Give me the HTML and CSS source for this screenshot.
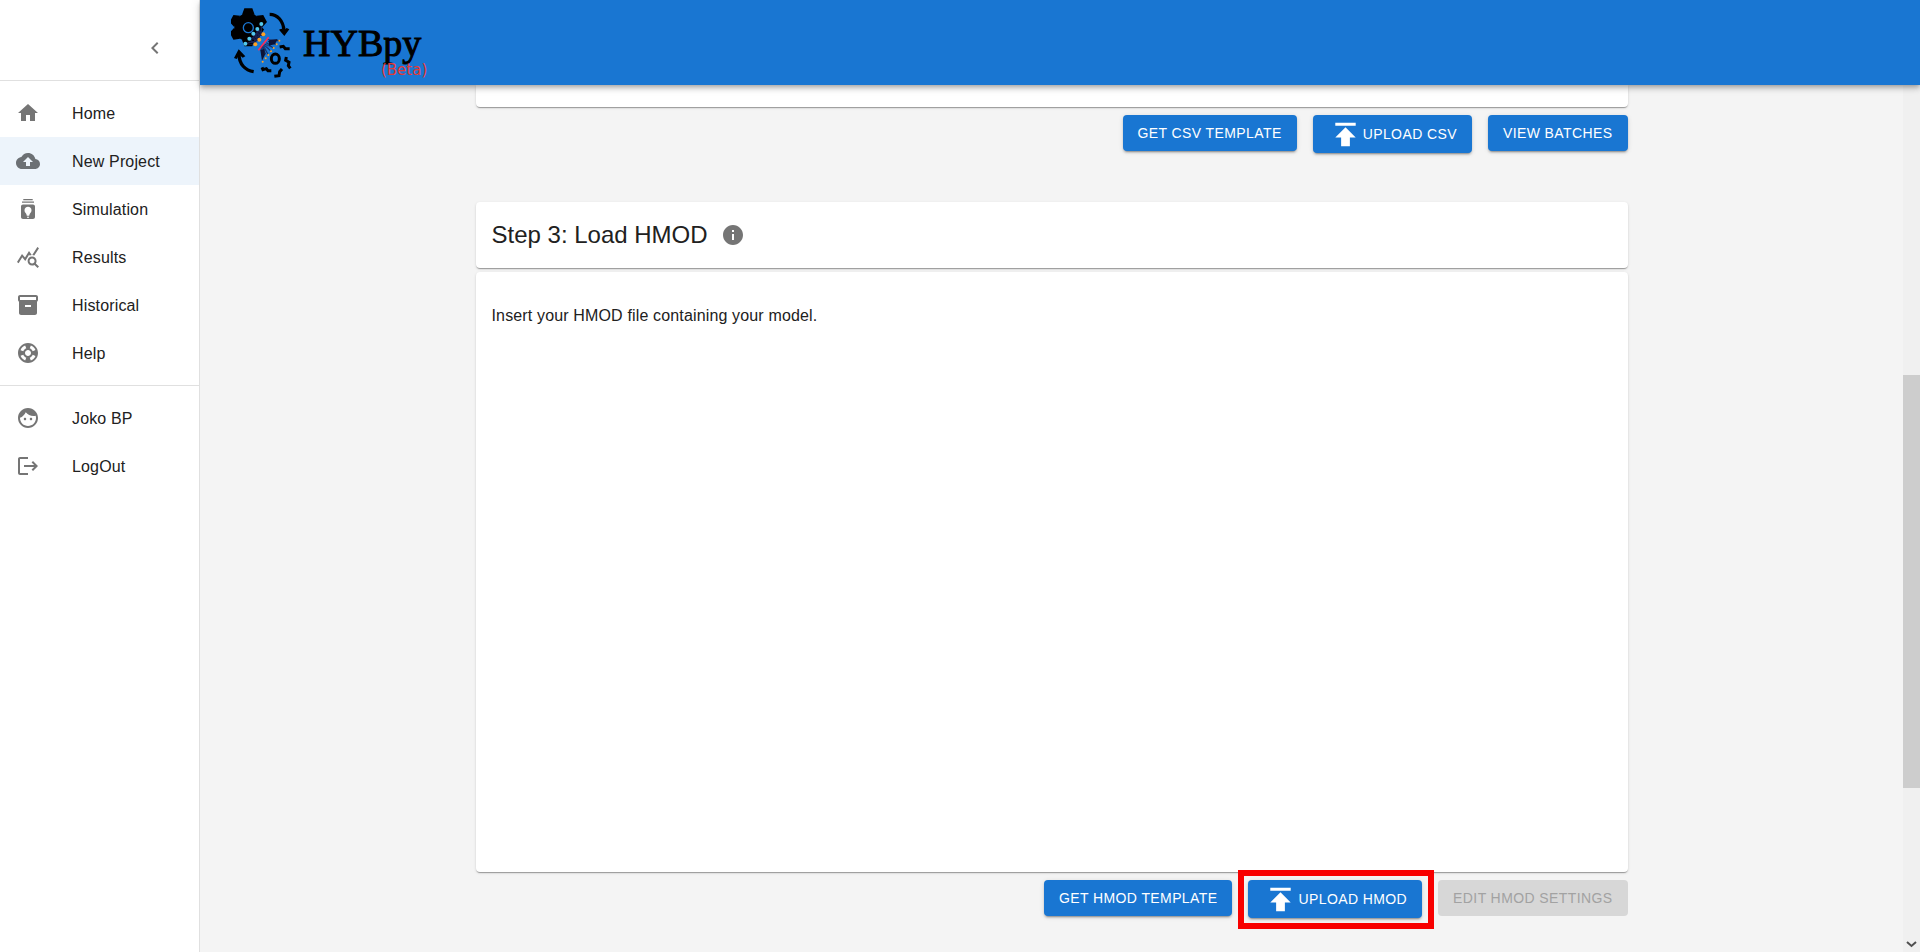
FILE: index.html
```html
<!DOCTYPE html>
<html lang="en">
<head>
<meta charset="utf-8">
<meta name="viewport" content="width=device-width, initial-scale=1">
<title>HYBpy - New Project</title>
<link rel="stylesheet" href="styles.css">
</head>
<body>
<div class="app">
  <aside class="sidebar">
    <div class="sidebar-top">
      <button class="icon-button" type="button" aria-label="Collapse menu">
        <svg class="icon" viewBox="0 0 24 24"><path d="M15.41 7.41 14 6l-6 6 6 6 1.41-1.41L10.83 12z"/></svg>
      </button>
    </div>
    <nav class="nav">
      <a class="nav-item" href="#home">
        <svg class="icon" viewBox="0 0 24 24"><path d="M10 20v-6h4v6h5v-8h3L12 3 2 12h3v8z"/></svg>
        <span>Home</span>
      </a>
      <a class="nav-item nav-item-active" href="#new">
        <svg class="icon" viewBox="0 0 24 24"><path d="M19.35 10.04C18.67 6.59 15.64 4 12 4 9.11 4 6.6 5.64 5.35 8.04 2.34 8.36 0 10.91 0 14c0 3.31 2.69 6 6 6h13c2.76 0 5-2.24 5-5 0-2.64-2.05-4.78-4.65-4.96zM14 13v4h-4v-4H7l5-5 5 5h-3z"/></svg>
        <span>New Project</span>
      </a>
      <a class="nav-item" href="#simulation">
        <svg class="icon" viewBox="0 0 24 24"><path d="M7.300 2h9.400v1.200H7.300zM6 4.600h12v1.200H6z"/><path fill-rule="evenodd" d="M17 7.500H7c-1.100 0-2 .9-2 2V20c0 1.100.9 2 2 2h10c1.100 0 2-.9 2-2V9.500c0-1.100-.9-2-2-2zM12 9.700c2 0 3.500 1.500 3.500 3.500 0 1.500-.8 2.500-1.500 3.200-.4.5-.7 1.300-.8 2.400h-2.400c-.1-1.100-.4-1.900-.8-2.400-.7-.7-1.500-1.700-1.500-3.200 0-2 1.500-3.500 3.500-3.500zM11 19.800h2v1h-2z"/></svg>
        <span>Simulation</span>
      </a>
      <a class="nav-item" href="#results">
        <svg class="icon" viewBox="0 0 24 24"><path d="M19.88 18.47c.44-.7.7-1.51.7-2.39 0-2.49-2.01-4.5-4.5-4.5s-4.5 2.010-4.5 4.500 2.010 4.500 4.490 4.500c.88 0 1.700-.26 2.390-.7L21.580 23 23 21.580l-3.120-3.110zm-3.800.11c-1.380 0-2.500-1.120-2.500-2.500s1.120-2.500 2.500-2.500 2.500 1.120 2.500 2.500-1.120 2.500-2.500 2.500zm-.36-8.500c-.74.02-1.450.18-2.100.45l-.55-.83-3.800 6.180-3.010-3.520-3.630 5.810L1 17l5-8 3 3.500L13 6l2.720 4.080zm2.590.5c-.64-.28-1.330-.45-2.050-.49L21.380 2 23 3.180l-4.690 7.400z"/></svg>
        <span>Results</span>
      </a>
      <a class="nav-item" href="#historical">
        <svg class="icon" viewBox="0 0 24 24"><path d="M20 2H4c-1 0-2 .9-2 2v3.010c0 .72.43 1.340 1 1.690V20c0 1.100 1.100 2 2 2h14c.9 0 2-.9 2-2V8.700c.57-.35 1-.97 1-1.690V4c0-1.100-1-2-2-2zm-5 12H9v-2h6v2zm5-7H4V4h16v3z"/></svg>
        <span>Historical</span>
      </a>
      <a class="nav-item" href="#help">
        <svg class="icon" viewBox="0 0 24 24"><path d="M12 2C6.480 2 2 6.480 2 12s4.480 10 10 10 10-4.480 10-10S17.520 2 12 2zm7.460 7.120-2.780 1.150c-.51-1.360-1.580-2.440-2.950-2.940l1.150-2.780c2.100.8 3.770 2.470 4.580 4.570zM12 15c-1.660 0-3-1.340-3-3s1.340-3 3-3 3 1.340 3 3-1.340 3-3 3zM9.130 4.540l1.170 2.780c-1.380.5-2.470 1.590-2.980 2.970L4.540 9.130c.81-2.110 2.480-3.780 4.590-4.590zM4.540 14.870l2.780-1.150c.51 1.380 1.590 2.460 2.970 2.960l-1.170 2.780c-2.100-.81-3.770-2.480-4.580-4.590zm10.340 4.590-1.150-2.780c1.370-.51 2.450-1.590 2.950-2.970l2.780 1.170c-.81 2.100-2.480 3.770-4.580 4.580z"/></svg>
        <span>Help</span>
      </a>
    </nav>
    <nav class="nav nav-account">
      <a class="nav-item" href="#profile">
        <svg class="icon" viewBox="0 0 24 24"><path d="M10.250 13c0 .69-.56 1.250-1.250 1.250S7.750 13.690 7.750 13s.56-1.250 1.250-1.250 1.250.56 1.250 1.250zM15 11.750c-.69 0-1.250.56-1.250 1.250s.56 1.250 1.250 1.250 1.250-.56 1.250-1.250-.56-1.250-1.250-1.250zm7 .25c0 5.520-4.480 10-10 10S2 17.520 2 12 6.480 2 12 2s10 4.480 10 10zm-2 0c0-.78-.12-1.530-.33-2.240-.7.150-1.420.24-2.170.24-3.130 0-5.920-1.440-7.760-3.690C8.690 8.870 6.600 10.880 4 11.860c.01.04 0 .09 0 .14 0 4.410 3.590 8 8 8s8-3.590 8-8z"/></svg>
        <span>Joko BP</span>
      </a>
      <a class="nav-item" href="#logout">
        <svg class="icon" viewBox="0 0 24 24"><path d="M4 5h8V3H4c-1.100 0-2 .9-2 2v14c0 1.100.9 2 2 2h8v-2H4zM17 7l-1.410 1.410L18.170 11H8v2h10.170l-2.580 2.580L17 17l5-5z"/></svg>
        <span>LogOut</span>
      </a>
    </nav>
  </aside>

  <div class="main">
    <header class="app-bar">
      <svg class="logo" viewBox="18 18 186 219" role="img" aria-label="HYBpy logo">
        <g transform="translate(70 82)">
          <circle r="42"/>
          <g id="teeth"><path d="M-19-38-12-57h24l7 19zM-19 38-12 57h24l7-19z"/></g>
          <use href="#teeth" transform="rotate(62)"/>
          <use href="#teeth" transform="rotate(118)"/>
        </g>
        <circle cx="70" cy="83" r="15" fill="none" stroke="#1976d2" stroke-width="4"/>
        <path d="M84 142 122 80l15 24-34 44z" fill="#1976d2"/>
        <g fill="none" stroke="#17204f" stroke-width="4">
          <path d="M109 72v31L97 87l6 32-18-18 6 32-18-17 18 17-30-2 42-12-30-3 42-13-18-16M91 133 85 101l30 2M97 87l-6 46"/>
          <path d="M125 118l38 4-34 2 25 9-30-4 22 15-27-12 19 22-23-20 15 31-18-29 10 27-12-24 3 32-7-33" stroke-width="2"/>
        </g>
        <path d="M132 121l26-4-8 15-18 5zM106 150l12-3 2 17-9 18z" fill="#0d1235"/>
        <path d="M131 112 100 151" fill="none" stroke="#ff2d55" stroke-width="5"/>
        <g fill="#53c8ec"><circle cx="109" cy="72" r="6"/><circle cx="97" cy="87" r="6"/><circle cx="85" cy="101" r="6"/><circle cx="73" cy="116" r="6"/><circle cx="61" cy="131" r="6"/></g>
        <g fill="#ffa226"><circle cx="115" cy="103" r="6"/><circle cx="103" cy="119" r="6"/><circle cx="91" cy="133" r="6"/><circle cx="163" cy="122" r="3"/><circle cx="155" cy="133" r="3"/><circle cx="146" cy="144" r="3"/><circle cx="138" cy="154" r="3"/><circle cx="130" cy="165" r="3"/><circle cx="122" cy="175" r="3"/><circle cx="113" cy="185" r="3"/></g>
        <g fill="none" stroke="#000" stroke-width="9">
          <ellipse cx="151" cy="176" rx="12" ry="14"/>
          <path d="M164 141l11-2 6 7h13M184 171l-2 10 10 6-2 10 6 8M171 207l-7 8-2 12-14 2M111 202l3 7 10-3 5 6h10"/>
          <path d="M134 43c23 0 41 19 43 49M86 215c-25-4-44-22-44-52" stroke-width="10"/>
        </g>
        <path d="M162 89l7-3 8 5 8-7 8 4-15 20zM27 174l14-26 20 21-8 4-10-9-8 13z"/>
      </svg>
      <div class="brand">
        <span class="brand-name">HYBpy</span>
        <span class="brand-tag">(Beta)</span>
      </div>
    </header>

    <div class="viewport">
      <main class="content">
        <div class="container">
          <section class="step">
            <div class="card card-end"></div>
            <div class="actions">
              <button class="button" type="button">GET CSV TEMPLATE</button>
              <button class="button button-upload" type="button">
                <svg class="upload-icon" viewBox="0 0 24 24"><path d="M5 4v2h14V4H5zm0 10h4v6h6v-6h4l-7-7-7 7z"/></svg>UPLOAD CSV</button>
              <button class="button" type="button">VIEW BATCHES</button>
            </div>
          </section>

          <section class="step">
            <div class="card card-title">
              <h2 class="title">Step 3: Load HMOD</h2>
              <button class="icon-button" type="button" aria-label="About this step">
                <svg class="icon" viewBox="0 0 24 24"><path d="M12 2C6.480 2 2 6.480 2 12s4.480 10 10 10 10-4.480 10-10S17.520 2 12 2zm1 15h-2v-6h2v6zm0-8h-2V7h2v2z"/></svg>
              </button>
            </div>
            <div class="card card-body">
              <p>Insert your HMOD file containing your model.</p>
            </div>
            <div class="actions">
              <button class="button" type="button">GET HMOD TEMPLATE</button>
              <button class="button button-upload button-marked" type="button">
                <svg class="upload-icon" viewBox="0 0 24 24"><path d="M5 4v2h14V4H5zm0 10h4v6h6v-6h4l-7-7-7 7z"/></svg>UPLOAD HMOD</button>
              <button class="button" type="button" disabled>EDIT HMOD SETTINGS</button>
            </div>
          </section>
        </div>
      </main>
      <div class="scroll-track" aria-hidden="true">
        <div class="scroll-thumb"></div>
        <svg class="scroll-arrow" viewBox="0 0 17 17"><path d="M4 7l4.500 4L13 7" fill="none" stroke="#505050" stroke-width="2"/></svg>
      </div>
    </div>
  </div>
</div>
</body>
</html>
```

FILE: styles.css
```css
* {
  box-sizing: border-box;
}

body {
  margin: 0;
  background: #f4f4f4;
  color: #212121;
  font: 16px/24px "Liberation Sans", Arial, sans-serif;
  letter-spacing: 0.00938em;
}

button {
  font-family: inherit;
}

.app {
  display: flex;
  height: 100vh;
  overflow: hidden;
}

/* Sidebar */
.sidebar {
  flex: 0 0 200px;
  background: #fff;
  border-right: 1px solid #e0e0e0;
}

.sidebar-top {
  display: flex;
  justify-content: flex-end;
  padding: 36px 32px 20px;
  border-bottom: 1px solid #e0e0e0;
}

.icon-button {
  display: flex;
  padding: 0;
  border: 0;
  background: none;
  cursor: pointer;
}

.icon {
  flex: none;
  width: 24px;
  height: 24px;
  fill: #757575;
}

.nav {
  padding: 8px 0;
}

.nav-account {
  border-top: 1px solid #e0e0e0;
}

.nav-item {
  display: flex;
  align-items: center;
  gap: 32px;
  height: 48px;
  padding: 0 16px;
  color: inherit;
  text-decoration: none;
}

.nav-item span {
  padding-top: 2px;
  white-space: nowrap;
}

.nav-item-active {
  background: #edf4fb;
}

.nav-item-active .icon {
  fill: #6c7074;
}

/* Main column */
.main {
  display: flex;
  flex: 1;
  flex-direction: column;
  min-width: 0;
}

.app-bar {
  z-index: 1;
  display: flex;
  flex: none;
  align-items: center;
  gap: 10px;
  height: 85px;
  padding: 0 31px;
  background: #1976d2;
  box-shadow: 0 2px 4px -1px rgba(0, 0, 0, 0.2), 0 4px 5px 0 rgba(0, 0, 0, 0.14), 0 1px 10px 0 rgba(0, 0, 0, 0.12);
  letter-spacing: normal;
}

.logo {
  width: 62px;
  height: 73px;
}

.brand {
  display: flex;
  flex-direction: column;
  padding-top: 14px;
}

.brand-name {
  color: #000;
  font: 38px/44px "Liberation Serif", serif;
  -webkit-text-stroke: 1px #000;
}

.brand-tag {
  align-self: flex-end;
  margin: -3px -6px 0 0;
  color: #e53935;
  font: 15px/16px "DejaVu Sans", sans-serif;
}

.viewport {
  display: flex;
  flex: 1;
  min-height: 0;
}

.content {
  flex: 1;
  min-width: 0;
  overflow: hidden;
}

.container {
  display: flex;
  flex-direction: column;
  gap: 49px;
  max-width: 1200px;
  margin: 0 auto;
  padding: 0 24px;
}

.card {
  background: #fff;
  border-radius: 4px;
  box-shadow: 0 2px 1px -1px rgba(0, 0, 0, 0.2), 0 1px 1px 0 rgba(0, 0, 0, 0.14), 0 1px 3px 0 rgba(0, 0, 0, 0.12);
}

.card-end {
  height: 22px;
  border-radius: 0 0 4px 4px;
}

.card-title {
  display: flex;
  align-items: center;
  gap: 13px;
  margin-bottom: 4px;
  padding: 17px 16px;
}

.title {
  margin: 0;
  font-size: 24px;
  font-weight: 400;
  letter-spacing: normal;
  line-height: 32px;
}

.card-body {
  min-height: 600px;
  padding: 32px 16px;
}

.card-body p {
  margin: 0;
}

/* Buttons */
.actions {
  display: flex;
  flex-wrap: wrap;
  align-items: flex-start;
  justify-content: flex-end;
  gap: 16px;
  padding-top: 8px;
}

.button {
  position: relative;
  display: flex;
  align-items: center;
  min-height: 36px;
  padding: 0 15px;
  border: 0;
  border-radius: 4px;
  background: #1976d2;
  box-shadow: 0 3px 1px -2px rgba(0, 0, 0, 0.2), 0 2px 2px 0 rgba(0, 0, 0, 0.14), 0 1px 5px 0 rgba(0, 0, 0, 0.12);
  color: #fff;
  font-size: 14px;
  letter-spacing: 0.02857em;
  white-space: nowrap;
  cursor: pointer;
}

.button:disabled {
  background: #d7d7d7;
  box-shadow: none;
  color: #a2a2a2;
  cursor: default;
}

.button-upload {
  height: 38px;
}

.upload-icon {
  width: 35px;
  height: 35px;
  fill: #fff;
}

.button-marked::after {
  content: "";
  position: absolute;
  inset: -10px -12px -11px -10px;
  border: 6px solid #f80000;
  pointer-events: none;
}

/* Scroll bar */
.scroll-track {
  display: grid;
  flex: none;
  grid-template-rows: 290fr 413fr 147fr 17px;
  width: 17px;
  background: #f0f0f0;
}

.scroll-thumb {
  grid-row: 2;
  background: #cdcdcd;
}

.scroll-arrow {
  grid-row: 4;
  width: 17px;
  height: 17px;
}
```
